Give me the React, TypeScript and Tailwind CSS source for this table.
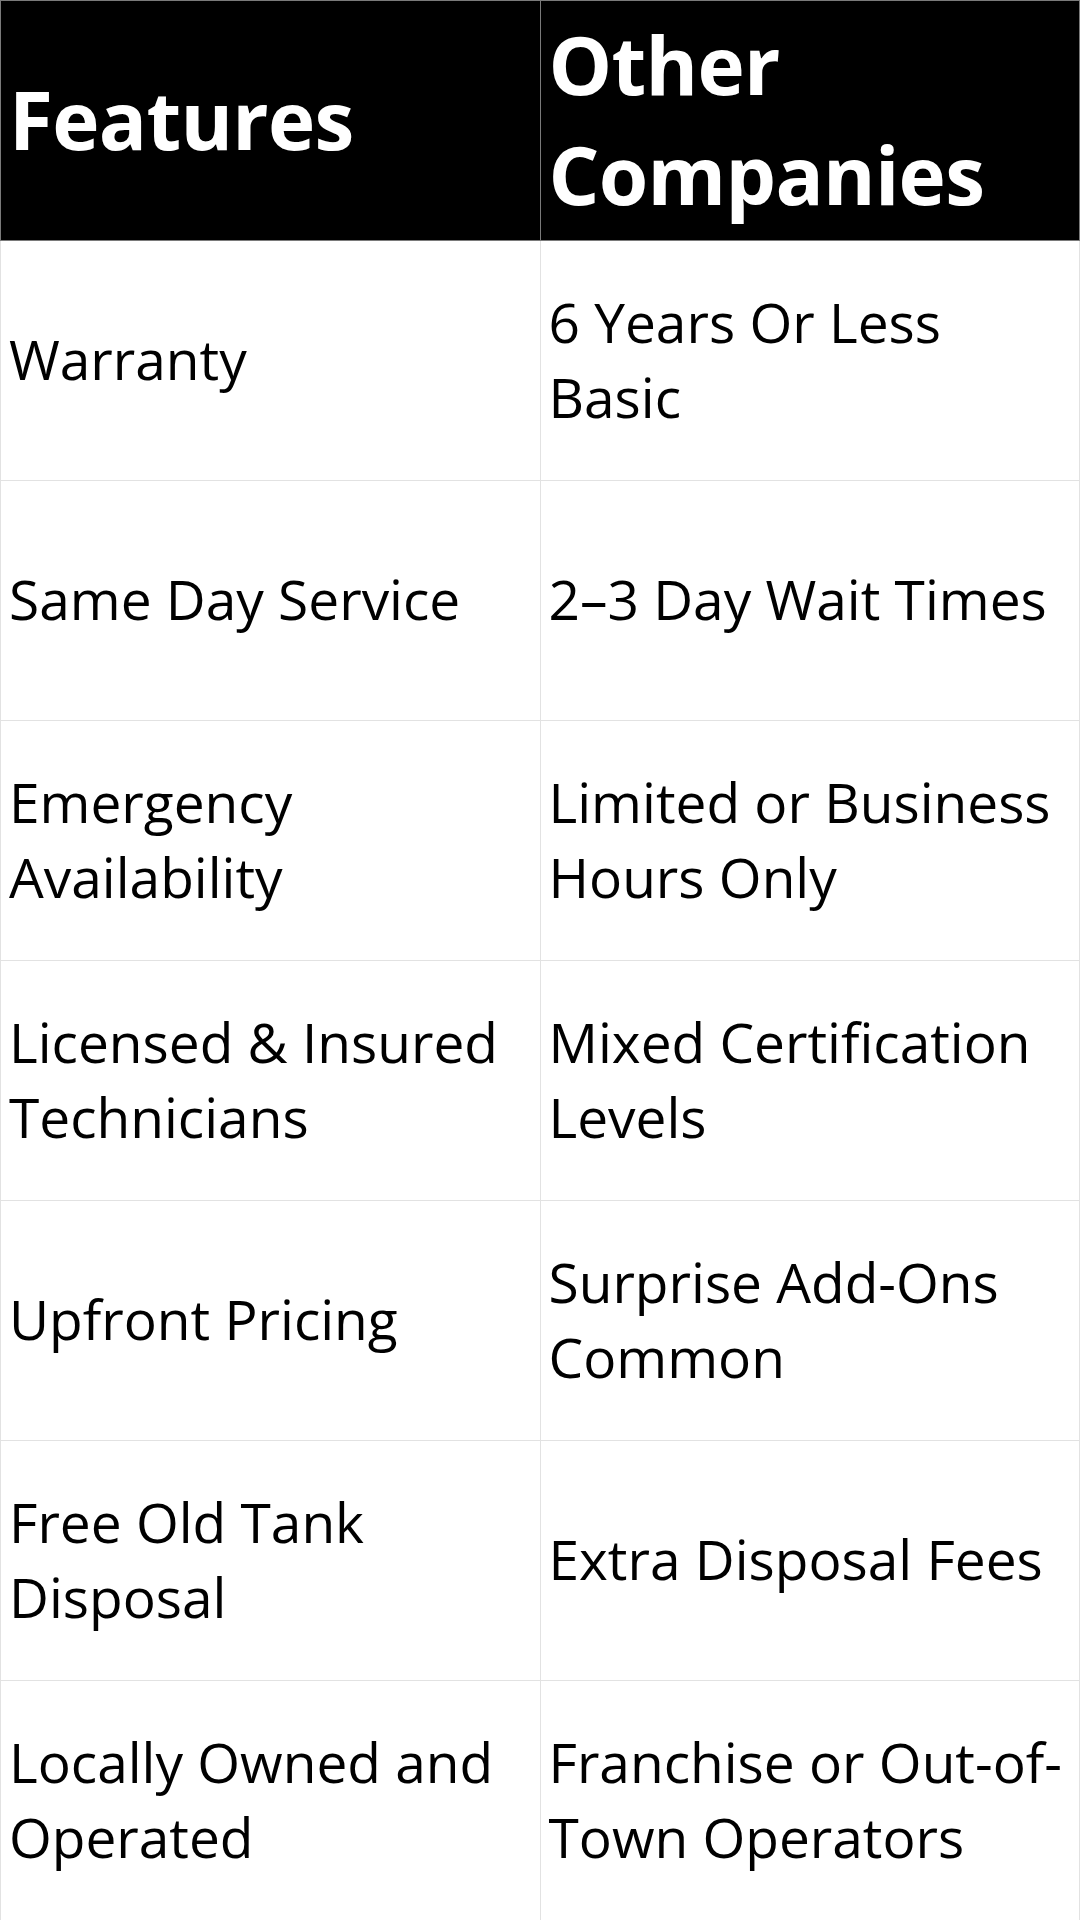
const rows: [string[], string[]][] = [
  [['Warranty'], ['6 Years Or Less', 'Basic']],
  [['Same Day Service'], ['2–3 Day Wait Times']],
  [['Emergency', 'Availability'], ['Limited or Business', 'Hours Only']],
  [['Licensed & Insured', 'Technicians'], ['Mixed Certification', 'Levels']],
  [['Upfront Pricing'], ['Surprise Add-Ons', 'Common']],
  [['Free Old Tank', 'Disposal'], ['Extra Disposal Fees']],
  [['Locally Owned and', 'Operated'], ['Franchise or Out-of-', 'Town Operators']],
];

const Lines = ({ lines }: { lines: string[] }) => (
  <>
    {lines.map((l, i) => (
      <span key={i} className="block whitespace-nowrap">
        {l}
      </span>
    ))}
  </>
);

export default function App() {
  return (
    <div className="w-[1080px] h-[1920px] bg-white font-['Open_Sans',sans-serif] text-black">
      <table className="w-full table-fixed border-collapse">
        <thead>
          <tr className="h-[240px] bg-black text-white">
            <th className="w-1/2 border border-[#7a7a7a] pl-[8px] pr-[10px] pb-[4px] text-left align-middle text-[80px] font-bold leading-[110px] tracking-[-0.7px]">
              Features
            </th>
            <th className="w-1/2 border border-[#7a7a7a] pl-[8px] pr-[10px] pb-[4px] text-left align-middle text-[80px] font-bold leading-[110px] tracking-[-0.7px]">
              <Lines lines={['Other', 'Companies']} />
            </th>
          </tr>
        </thead>
        <tbody>
          {rows.map(([feat, other], i) => (
            <tr key={i} className="h-[240px]">
              <td className="border border-[#e2e2e2] pl-[8px] pr-[8px] pb-[4px] align-middle text-[55px] leading-[75px]">
                <Lines lines={feat} />
              </td>
              <td className="border border-[#e2e2e2] pl-[8px] pr-[8px] pb-[4px] align-middle text-[55px] leading-[75px]">
                <Lines lines={other} />
              </td>
            </tr>
          ))}
        </tbody>
      </table>
    </div>
  );
}
